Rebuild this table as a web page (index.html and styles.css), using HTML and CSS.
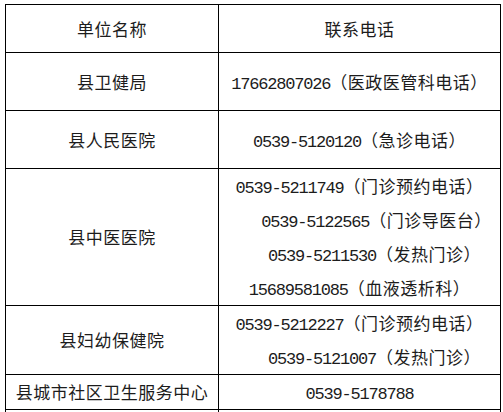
FILE: index.html
```html
<!DOCTYPE html>
<html lang="zh-CN">
<head>
<meta charset="utf-8">
<title>联系电话</title>
<link rel="stylesheet" href="styles.css">
</head>
<body>
<table class="contacts">
  <colgroup><col class="col-name"><col class="col-phone"></colgroup>
  <tr class="row-head">
    <td>单位名称</td>
    <td>联系电话</td>
  </tr>
  <tr class="row-tall">
    <td>县卫健局</td>
    <td><span class="num">17662807026</span>（医政医管科电话）</td>
  </tr>
  <tr class="row-tall">
    <td>县人民医院</td>
    <td><span class="num">0539-5120120</span>（急诊电话）</td>
  </tr>
  <tr class="row-four">
    <td>县中医医院</td>
    <td>
      <div class="line"><span class="num">0539-5211749</span>（门诊预约电话）</div>
      <div class="line shift-a"><span class="num">0539-5122565</span>（门诊导医台）</div>
      <div class="line shift-b"><span class="num">0539-5211530</span>（发热门诊）</div>
      <div class="line"><span class="num">15689581085</span>（血液透析科）</div>
    </td>
  </tr>
  <tr class="row-two">
    <td>县妇幼保健院</td>
    <td>
      <div class="line"><span class="num">0539-5212227</span>（门诊预约电话）</div>
      <div class="line shift-b"><span class="num">0539-5121007</span>（发热门诊）</div>
    </td>
  </tr>
  <tr class="row-one">
    <td>县城市社区卫生服务中心</td>
    <td><span class="num">0539-5178788</span></td>
  </tr>
  <tr class="row-one">
    <td></td>
    <td></td>
  </tr>
</table>
</body>
</html>
```
FILE: styles.css
```css
html, body {
  margin: 0;
  padding: 0;
  background: #ffffff;
}
body {
  padding: 4px 0 0 5px;
  font-family: "Noto Sans CJK SC", "Noto Sans CJK JP", sans-serif;
  color: #1c1c1c;
  overflow: hidden;
}
.contacts {
  border-collapse: collapse;
  table-layout: fixed;
  width: 495px;
  font-size: 17px;
  letter-spacing: 0.5px;
}
.col-name { width: 213px; }
.col-phone { width: 282px; }
.contacts td {
  border: 1px solid #000;
  padding: 0;
  text-align: center;
  vertical-align: middle;
  line-height: 34px;
  white-space: nowrap;
}
.num {
  font-family: "Liberation Mono", "DejaVu Sans Mono", monospace;
  font-size: 17px;
  letter-spacing: -1.2px;
  line-height: 1;
}
.row-head td { height: 47px; }
.row-tall td { height: 57px; }
.row-four td { height: 135px; }
.row-two td { height: 68px; }
.row-one td { height: 33px; }
.line {
  height: 34px;
  line-height: 34px;
}
.shift-a { padding-left: 34px; }
.shift-b { padding-left: 30px; }
```
